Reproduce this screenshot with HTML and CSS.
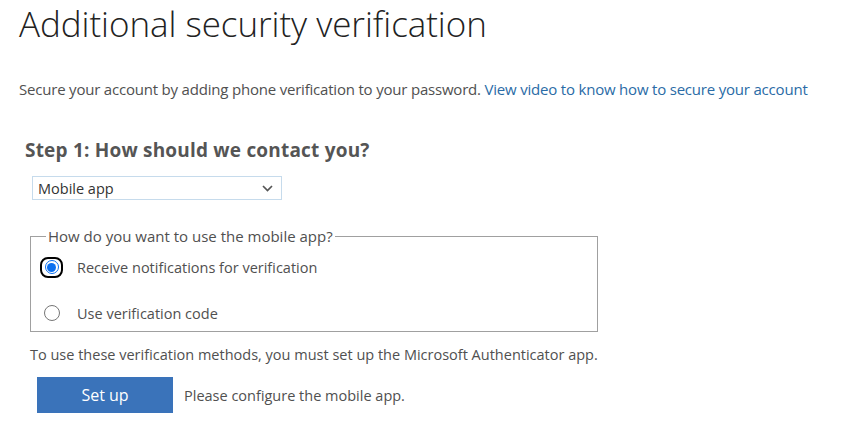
FILE: index.html
```html
<!DOCTYPE html>
<html>
<head>
<meta charset="utf-8">
<link rel="stylesheet" href="styles.css">
</head>
<body>
<main class="page">
  <h1 class="title">Additional security verification</h1>
  <p class="intro">Secure your account by adding phone verification to your password. <a class="link" href="#">View video to know how to secure your account</a></p>
  <section class="step">
    <h2 class="step-title">Step 1: How should we contact you?</h2>
    <div class="select">
      <span class="select-value">Mobile app</span>
      <svg class="chev" width="11" height="7" viewBox="0 0 11 7"><path d="M1 1 L5.5 5.5 L10 1" fill="none" stroke="#555" stroke-width="1.7"/></svg>
    </div>
    <fieldset class="options">
      <legend class="legend">How do you want to use the mobile app?</legend>
      <label class="option">
        <span class="focus-ring"><span class="radio checked"><span class="dot"></span></span></span>
        <span class="option-text">Receive notifications for verification</span>
      </label>
      <label class="option">
        <span class="radio-slot"><span class="radio"></span></span>
        <span class="option-text">Use verification code</span>
      </label>
    </fieldset>
    <p class="note">To use these verification methods, you must set up the Microsoft Authenticator app.</p>
    <div class="setup-row">
      <button class="btn">Set up</button>
      <span class="setup-msg">Please configure the mobile app.</span>
    </div>
  </section>
</main>
</body>
</html>
```
FILE: styles.css
```css
html, body {
  margin: 0;
  padding: 0;
  background: #fff;
}
body {
  font-family: "Open Sans", "Noto Sans", sans-serif;
  color: #505050;
}
.page {
  padding: 3px 0 0 19px;
}
.title {
  margin: 0;
  font-size: 35px;
  font-weight: 300;
  color: #222;
  line-height: 42px;
  letter-spacing: -0.05px;
}
.intro {
  margin: 34px 0 0 0;
  font-size: 15px;
  line-height: 20px;
  color: #505050;
  letter-spacing: -0.2px;
}
.link {
  color: #2a6ba6;
  text-decoration: none;
}
.step {
  padding-left: 6px;
}
.step-title {
  margin: 38px 0 0 0;
  font-size: 19px;
  font-weight: 700;
  line-height: 26px;
  color: #555;
  letter-spacing: 0.2px;
}
.select {
  margin: 13px 0 0 7px;
  width: 250px;
  height: 24px;
  border: 1px solid #c6dbec;
  box-sizing: border-box;
  display: flex;
  align-items: center;
  justify-content: space-between;
  padding: 0 8px 0 5px;
}
.select-value {
  font-size: 14.5px;
  color: #333;
}
.options {
  margin: 26px 0 0 5px;
  width: 568px;
  border: 1px solid #a0a0a0;
  padding: 0 0 6px 0;
  box-sizing: border-box;
}
.legend {
  font-size: 15px;
  padding: 0 2px;
  margin-left: 15px;
  color: #505050;
  line-height: 20px;
}
.option {
  display: flex;
  align-items: center;
  height: 24px;
  margin: 22px 0 0 9px;
}
.option:first-of-type {
  margin-top: 9px;
}
.focus-ring {
  width: 23px;
  height: 21px;
  border: 2.5px solid #000;
  border-radius: 8px;
  box-sizing: border-box;
  display: flex;
  align-items: center;
  justify-content: center;
  background: #fff;
}
.radio-slot {
  width: 23px;
  height: 21px;
  display: flex;
  align-items: center;
  justify-content: center;
}
.radio {
  width: 16px;
  height: 16px;
  border: 1px solid #767676;
  border-radius: 50%;
  box-sizing: border-box;
  display: flex;
  align-items: center;
  justify-content: center;
  background: #fff;
}
.radio.checked {
  width: 14px;
  height: 14px;
  border: 1.5px solid #0a6ff0;
}
.dot {
  width: 9px;
  height: 9px;
  border-radius: 50%;
  background: #0a6ff0;
}
.option-text {
  margin-left: 14px;
  font-size: 14.5px;
  color: #505050;
}
.note {
  margin: 13px 0 0 5px;
  font-size: 14.5px;
  line-height: 20px;
  color: #505050;
}
.setup-row {
  margin: 12px 0 0 12px;
  display: flex;
  align-items: center;
}
.btn {
  width: 136px;
  height: 36px;
  border: none;
  background: #3a73ba;
  color: #fff;
  font-family: inherit;
  font-size: 16px;
  padding: 0;
}
.setup-msg {
  margin-left: 11px;
  font-size: 14.5px;
  color: #505050;
}
```
